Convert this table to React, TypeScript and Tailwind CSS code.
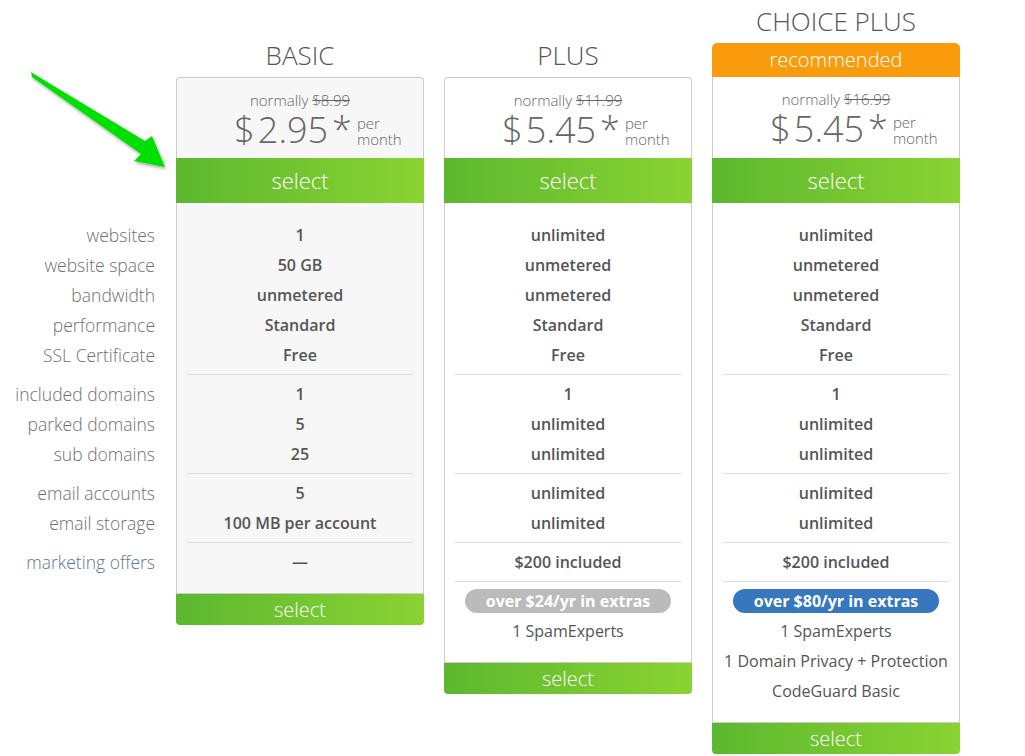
import React from "react"

const labelGroups = [
  ["websites", "website space", "bandwidth", "performance", "SSL Certificate"],
  ["included domains", "parked domains", "sub domains"],
  ["email accounts", "email storage"],
  ["marketing offers"],
]

type Plan = {
  name: string
  normally: string
  price: string
  recommended?: boolean
  muted?: boolean
  groups: string[][]
  badge?: { text: string; color: string }
  extras: string[]
}

const plans: Plan[] = [
  {
    name: "BASIC",
    normally: "$8.99",
    price: "2.95",
    muted: true,
    groups: [
      ["1", "50 GB", "unmetered", "Standard", "Free"],
      ["1", "5", "25"],
      ["5", "100 MB per account"],
      ["—"],
    ],
    extras: [],
  },
  {
    name: "PLUS",
    normally: "$11.99",
    price: "5.45",
    groups: [
      ["unlimited", "unmetered", "unmetered", "Standard", "Free"],
      ["1", "unlimited", "unlimited"],
      ["unlimited", "unlimited"],
      ["$200 included"],
    ],
    badge: { text: "over $24/yr in extras", color: "bg-[#bbbbbb]" },
    extras: ["1 SpamExperts"],
  },
  {
    name: "CHOICE PLUS",
    normally: "$16.99",
    price: "5.45",
    recommended: true,
    groups: [
      ["unlimited", "unmetered", "unmetered", "Standard", "Free"],
      ["1", "unlimited", "unlimited"],
      ["unlimited", "unlimited"],
      ["$200 included"],
    ],
    badge: { text: "over $80/yr in extras", color: "bg-[#3677bd]" },
    extras: ["1 SpamExperts", "1 Domain Privacy + Protection", "CodeGuard Basic"],
  },
]

function Divider() {
  return <div className="my-[4px] h-px bg-[#dddddd]" />
}

function PlanCard({ plan }: { plan: Plan }) {
  const bg = plan.muted ? "bg-[#f7f7f7]" : "bg-white"
  return (
    <div className="flex w-[248px] flex-col">
      {/* heading + recommended bar */}
      <div className="flex h-[77px] flex-col justify-end">
        <h2 className="mb-[5px] text-center text-[26px] font-light leading-[34px] text-[#555]">{plan.name}</h2>
        {plan.recommended && (
          <div className="flex h-[34px] items-center justify-center rounded-t-[5px] bg-[#f89c0e] text-[20px] font-light text-white">
            recommended
          </div>
        )}
      </div>

      {/* price */}
      <div
        className={`${bg} h-[81px] border-x border-[#cccccc] pt-[12px] ${
          plan.recommended ? "" : "rounded-t-[4px] border-t"
        }`}
      >
        <div className="text-center text-[15px] font-light leading-[20px] text-[#666]">
          normally <span className="line-through">{plan.normally}</span>
        </div>
        <div className="flex h-[40px] items-center justify-center pl-[36px] text-[#666]">
          <span className="text-[36px] font-light leading-[36px]">$</span>
          <span className="ml-[3px] text-[36px] font-light leading-[36px]">{plan.price}</span>
          <span className="ml-[4px] text-[36px] font-light leading-[36px]">*</span>
          <span className="ml-[5px] flex flex-col pt-[2px] text-[15px] font-light leading-[16px]">
            <span>per</span>
            <span>month</span>
          </span>
        </div>
      </div>

      <button className="flex h-[45px] items-center justify-center bg-gradient-to-r from-[#5cb82f] to-[#8ad332] text-[22px] font-light text-white">
        select
      </button>

      {/* features */}
      <div className={`${bg} border-x border-[#cccccc] px-[10px] pb-[16px] pt-[17px]`}>
        {plan.groups.map((g, gi) => (
          <div key={gi}>
            {gi > 0 && <Divider />}
            {g.map((v, i) => (
              <div key={i} className="flex h-[30px] items-center justify-center text-[16px] font-semibold text-[#555]">
                {v}
              </div>
            ))}
          </div>
        ))}
        {plan.badge && (
          <>
            <Divider />
            <div className="flex h-[30px] items-center justify-center">
              <span
                className={`${plan.badge.color} flex h-[24px] w-[206px] items-center justify-center rounded-full text-[16px] font-bold text-white`}
              >
                {plan.badge.text}
              </span>
            </div>
          </>
        )}
        {plan.extras.map((e, i) => (
          <div
            key={i}
            className="flex h-[30px] items-center justify-center whitespace-nowrap text-[16px] text-[#555]"
          >
            {e}
          </div>
        ))}
      </div>

      <button className="flex h-[32px] items-center justify-center rounded-b-[4px] border-t border-[#cccccc] bg-gradient-to-r from-[#5cb82f] to-[#8ad332] text-[20px] font-light text-white">
        select
      </button>
    </div>
  )
}

export default function App() {
  return (
    <div className="relative h-[756px] w-[1025px] overflow-hidden bg-white font-['Open_Sans',sans-serif]">
      <div className="flex items-start">
        {/* row labels */}
        <div className="w-[156px] pr-[1px] pt-[220px] text-right">
          {labelGroups.map((g, gi) => (
            <div key={gi}>
              {gi > 0 && <div className="h-[9px]" />}
              {g.map((l) => (
                <div
                  key={l}
                  className={`h-[30px] text-[17.5px] font-light leading-[30px] ${
                    l === "marketing offers" ? "text-[#62758f]" : "text-[#6f6f6f]"
                  }`}
                >
                  {l}
                </div>
              ))}
            </div>
          ))}
        </div>

        <div className="ml-[20px] flex items-start gap-[20px]">
          {plans.map((p) => (
            <PlanCard key={p.name} plan={p} />
          ))}
        </div>
      </div>

      {/* green pointer arrow */}
      <svg className="absolute left-0 top-0" width="180" height="180" viewBox="0 0 180 180">
        <defs>
          <filter id="sh" x="-20%" y="-20%" width="140%" height="140%">
            <feDropShadow dx="1" dy="2" stdDeviation="1.5" floodColor="#000" floodOpacity="0.35" />
          </filter>
        </defs>
        <polygon
          points="31,72 34,74 145,141 152,136 165,167 134,161 141,154 32,77"
          fill="#00e000"
          filter="url(#sh)"
        />
      </svg>
    </div>
  )
}
